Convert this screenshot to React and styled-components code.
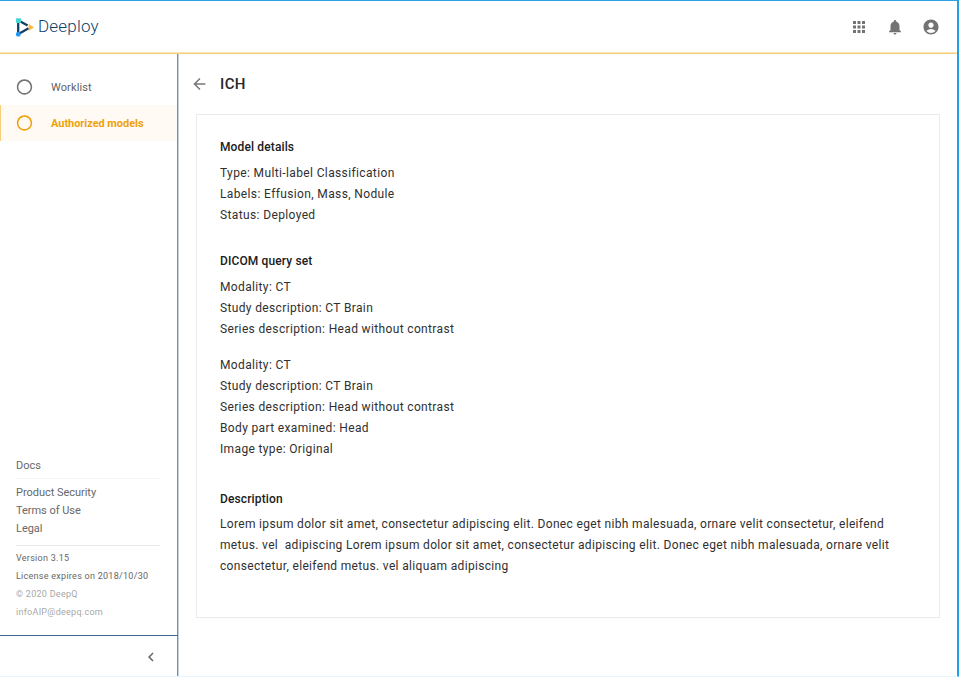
import React from "react";
import styled, { createGlobalStyle } from "styled-components";
import {
  MdApps,
  MdNotifications,
  MdAccountCircle,
  MdArrowBack,
  MdChevronLeft,
  MdRadioButtonUnchecked,
} from "react-icons/md";

const GlobalStyle = createGlobalStyle`
  * { box-sizing: border-box; }
  body {
    margin: 0;
    background: #fff;
    font-family: Roboto, "Liberation Sans", sans-serif;
    color: #222;
  }
  h1, h2, p, ul { margin: 0; padding: 0; }
  svg { display: block; flex: none; }
`;

const Frame = styled.div`
  display: flex;
  flex-direction: column;
  width: 959px;
  height: 677px;
  overflow: hidden;
  border-top: 1px solid #2ba1e6;
  border-right: 2px solid #1fa0e8;
  border-bottom: 1px solid #e8f5fc;
`;

const Header = styled.header`
  display: flex;
  align-items: center;
  justify-content: space-between;
  flex: none;
  height: 53px;
  padding: 0 17px 0 16px;
  border-bottom: 1px solid #f7ce79;
  box-shadow: inset 0 -1px 0 #fbe5b6;
`;

const Brand = styled.div`
  display: flex;
  align-items: center;
  gap: 4px;
`;

const BrandName = styled.span`
  padding-bottom: 2px;
  font-size: 17px;
  font-weight: 300;
  line-height: 20px;
  letter-spacing: 0.2px;
  color: #0f426b;
`;

const HeaderActions = styled.div`
  display: flex;
  gap: 18px;
  color: #737373;
`;

const Body = styled.div`
  display: flex;
  flex: 1;
  min-height: 0;
`;

const Sidebar = styled.aside`
  display: flex;
  flex-direction: column;
  flex: none;
  width: 179px;
  padding-top: 15px;
  border-right: 1px solid #c3d3e0;
  box-shadow: inset -1px 0 0 #7190ab;
`;

const NavItem = styled.div`
  display: flex;
  align-items: center;
  gap: 18px;
  height: 36px;
  margin-right: 1px;
  padding-left: 14px;
  border-left: 1px solid ${(p) => (p.$active ? "#f8cd7c" : "transparent")};
  background: ${(p) => (p.$active ? "#fffaf3" : "transparent")};
  color: ${(p) => (p.$active ? "#eea30c" : "#737373")};

  svg { transform: translateX(0.5px) scale(1.02); }
`;

const NavLabel = styled.span`
  font-size: 11px;
  font-weight: ${(p) => (p.$active ? 700 : 400)};
  letter-spacing: ${(p) => p.$spacing}px;
  color: ${(p) => (p.$active ? "#eea30c" : "#626262")};
`;

const SideInfo = styled.div`
  margin-top: auto;
  padding: 0 18px 13px 16px;
`;

const LinkGroup = styled.div`
  padding: ${(p) => p.$pad};
  border-bottom: 1px solid ${(p) => p.$line};
`;

const SideLink = styled.p`
  font-size: 11px;
  line-height: 18px;
  letter-spacing: -0.03px;
  white-space: nowrap;
  color: #686868;
`;

const Meta = styled.p`
  font-size: 9px;
  line-height: 18px;
  letter-spacing: 0.27px;
  white-space: nowrap;
  color: ${(p) => (p.$muted ? "#a8a8a8" : "#666")};
`;

const CollapseBar = styled.div`
  display: flex;
  align-items: center;
  justify-content: flex-end;
  flex: none;
  height: 41px;
  padding: 2px 18px 0 0;
  border-top: 1px solid #44698c;
  color: #666;
`;

const Main = styled.main`
  flex: 1;
  min-width: 0;
  padding: 20px 17px 0;
`;

const TitleRow = styled.div`
  display: flex;
  align-items: center;
  gap: 12px;
  height: 20px;
  margin-left: -6px;
  color: #777;

  svg { transform: translateX(0.4px); }
`;

const Title = styled.h1`
  font-size: 15px;
  font-weight: 500;
  line-height: 20px;
  letter-spacing: 0.4px;
  color: #262626;
`;

const Card = styled.section`
  width: 744px;
  height: 504px;
  margin-top: 20px;
  padding: 22px 23px 0;
  border: 1px solid #ebebeb;
`;

const Section = styled.div`
  margin-bottom: ${(p) => p.$after}px;
`;

const SectionTitle = styled.h2`
  margin-bottom: ${(p) => p.$gap}px;
  font-size: 12px;
  font-weight: 500;
  line-height: 21px;
  letter-spacing: 0.13px;
  color: #202020;
`;

const Block = styled.div`
  & + & { margin-top: 15px; }
`;

const Line = styled.p`
  font-size: 12px;
  line-height: 21px;
  letter-spacing: ${(p) => p.$spacing}px;
  white-space: pre;
  color: #303030;
`;

const Logo = () => (
  <svg width="18" height="19" viewBox="0 0 18 19">
    <path d="M2.2 2v14M4 3.2l7.6 4.3M3.4 15.4l9.2-5.2" stroke="#123f66" strokeWidth="2.3" fill="none" />
    <path d="M12.7 5.8L18 9.4l-5.3 3.3z" fill="#fbb940" />
    <rect x="0" y="0.3" width="5" height="4.6" rx="0.8" fill="#43d6d3" />
    <rect x="0" y="14" width="4.6" height="4.4" rx="1.6" fill="#2196ee" />
  </svg>
);

const nav = [
  { label: "Worklist", spacing: 0.12 },
  { label: "Authorized models", active: true, spacing: -0.05 },
];

const sections = [
  {
    title: "Model details",
    gap: 5,
    after: 25,
    spacing: 0.37,
    blocks: [["Type: Multi-label Classification", "Labels: Effusion, Mass, Nodule", "Status: Deployed"]],
  },
  {
    title: "DICOM query set",
    gap: 5,
    after: 29,
    spacing: 0.355,
    blocks: [
      ["Modality: CT", "Study description: CT Brain", "Series description: Head without contrast"],
      [
        "Modality: CT",
        "Study description: CT Brain",
        "Series description: Head without contrast",
        "Body part examined: Head",
        "Image type: Original",
      ],
    ],
  },
  {
    title: "Description",
    gap: 4,
    after: 0,
    spacing: 0.333,
    blocks: [
      [
        "Lorem ipsum dolor sit amet, consectetur adipiscing elit. Donec eget nibh malesuada, ornare velit consectetur, eleifend",
        "metus. vel  adipiscing Lorem ipsum dolor sit amet, consectetur adipiscing elit. Donec eget nibh malesuada, ornare velit",
        "consectetur, eleifend metus. vel aliquam adipiscing",
      ],
    ],
  },
];

export default function App() {
  return (
    <>
      <GlobalStyle />
      <Frame>
        <Header>
          <Brand>
            <Logo />
            <BrandName>Deeploy</BrandName>
          </Brand>
          <HeaderActions>
            <MdApps size={18} />
            <MdNotifications size={18} />
            <MdAccountCircle size={18} />
          </HeaderActions>
        </Header>
        <Body>
          <Sidebar>
            {nav.map((n) => (
              <NavItem key={n.label} $active={n.active}>
                <MdRadioButtonUnchecked size={18} />
                <NavLabel $active={n.active} $spacing={n.spacing}>{n.label}</NavLabel>
              </NavItem>
            ))}
            <SideInfo>
              <LinkGroup $pad="0 0 3px" $line="#f4f4f4">
                <SideLink>Docs</SideLink>
              </LinkGroup>
              <LinkGroup $pad="5px 0 7px" $line="#e9e9e9">
                <SideLink>Product Security</SideLink>
                <SideLink>Terms of Use</SideLink>
                <SideLink>Legal</SideLink>
              </LinkGroup>
              <LinkGroup $pad="3px 0 0" $line="transparent">
                <Meta>Version 3.15</Meta>
                <Meta>License expires on 2018/10/30</Meta>
                <Meta $muted>© 2020 DeepQ</Meta>
                <Meta $muted>infoAIP@deepq.com</Meta>
              </LinkGroup>
            </SideInfo>
            <CollapseBar>
              <MdChevronLeft size={18} />
            </CollapseBar>
          </Sidebar>
          <Main>
            <TitleRow>
              <MdArrowBack size={18} />
              <Title>ICH</Title>
            </TitleRow>
            <Card>
              {sections.map((s) => (
                <Section key={s.title} $after={s.after}>
                  <SectionTitle $gap={s.gap}>{s.title}</SectionTitle>
                  {s.blocks.map((lines, i) => (
                    <Block key={i}>
                      {lines.map((l) => (
                        <Line key={l} $spacing={s.spacing}>{l}</Line>
                      ))}
                    </Block>
                  ))}
                </Section>
              ))}
            </Card>
          </Main>
        </Body>
      </Frame>
    </>
  );
}
